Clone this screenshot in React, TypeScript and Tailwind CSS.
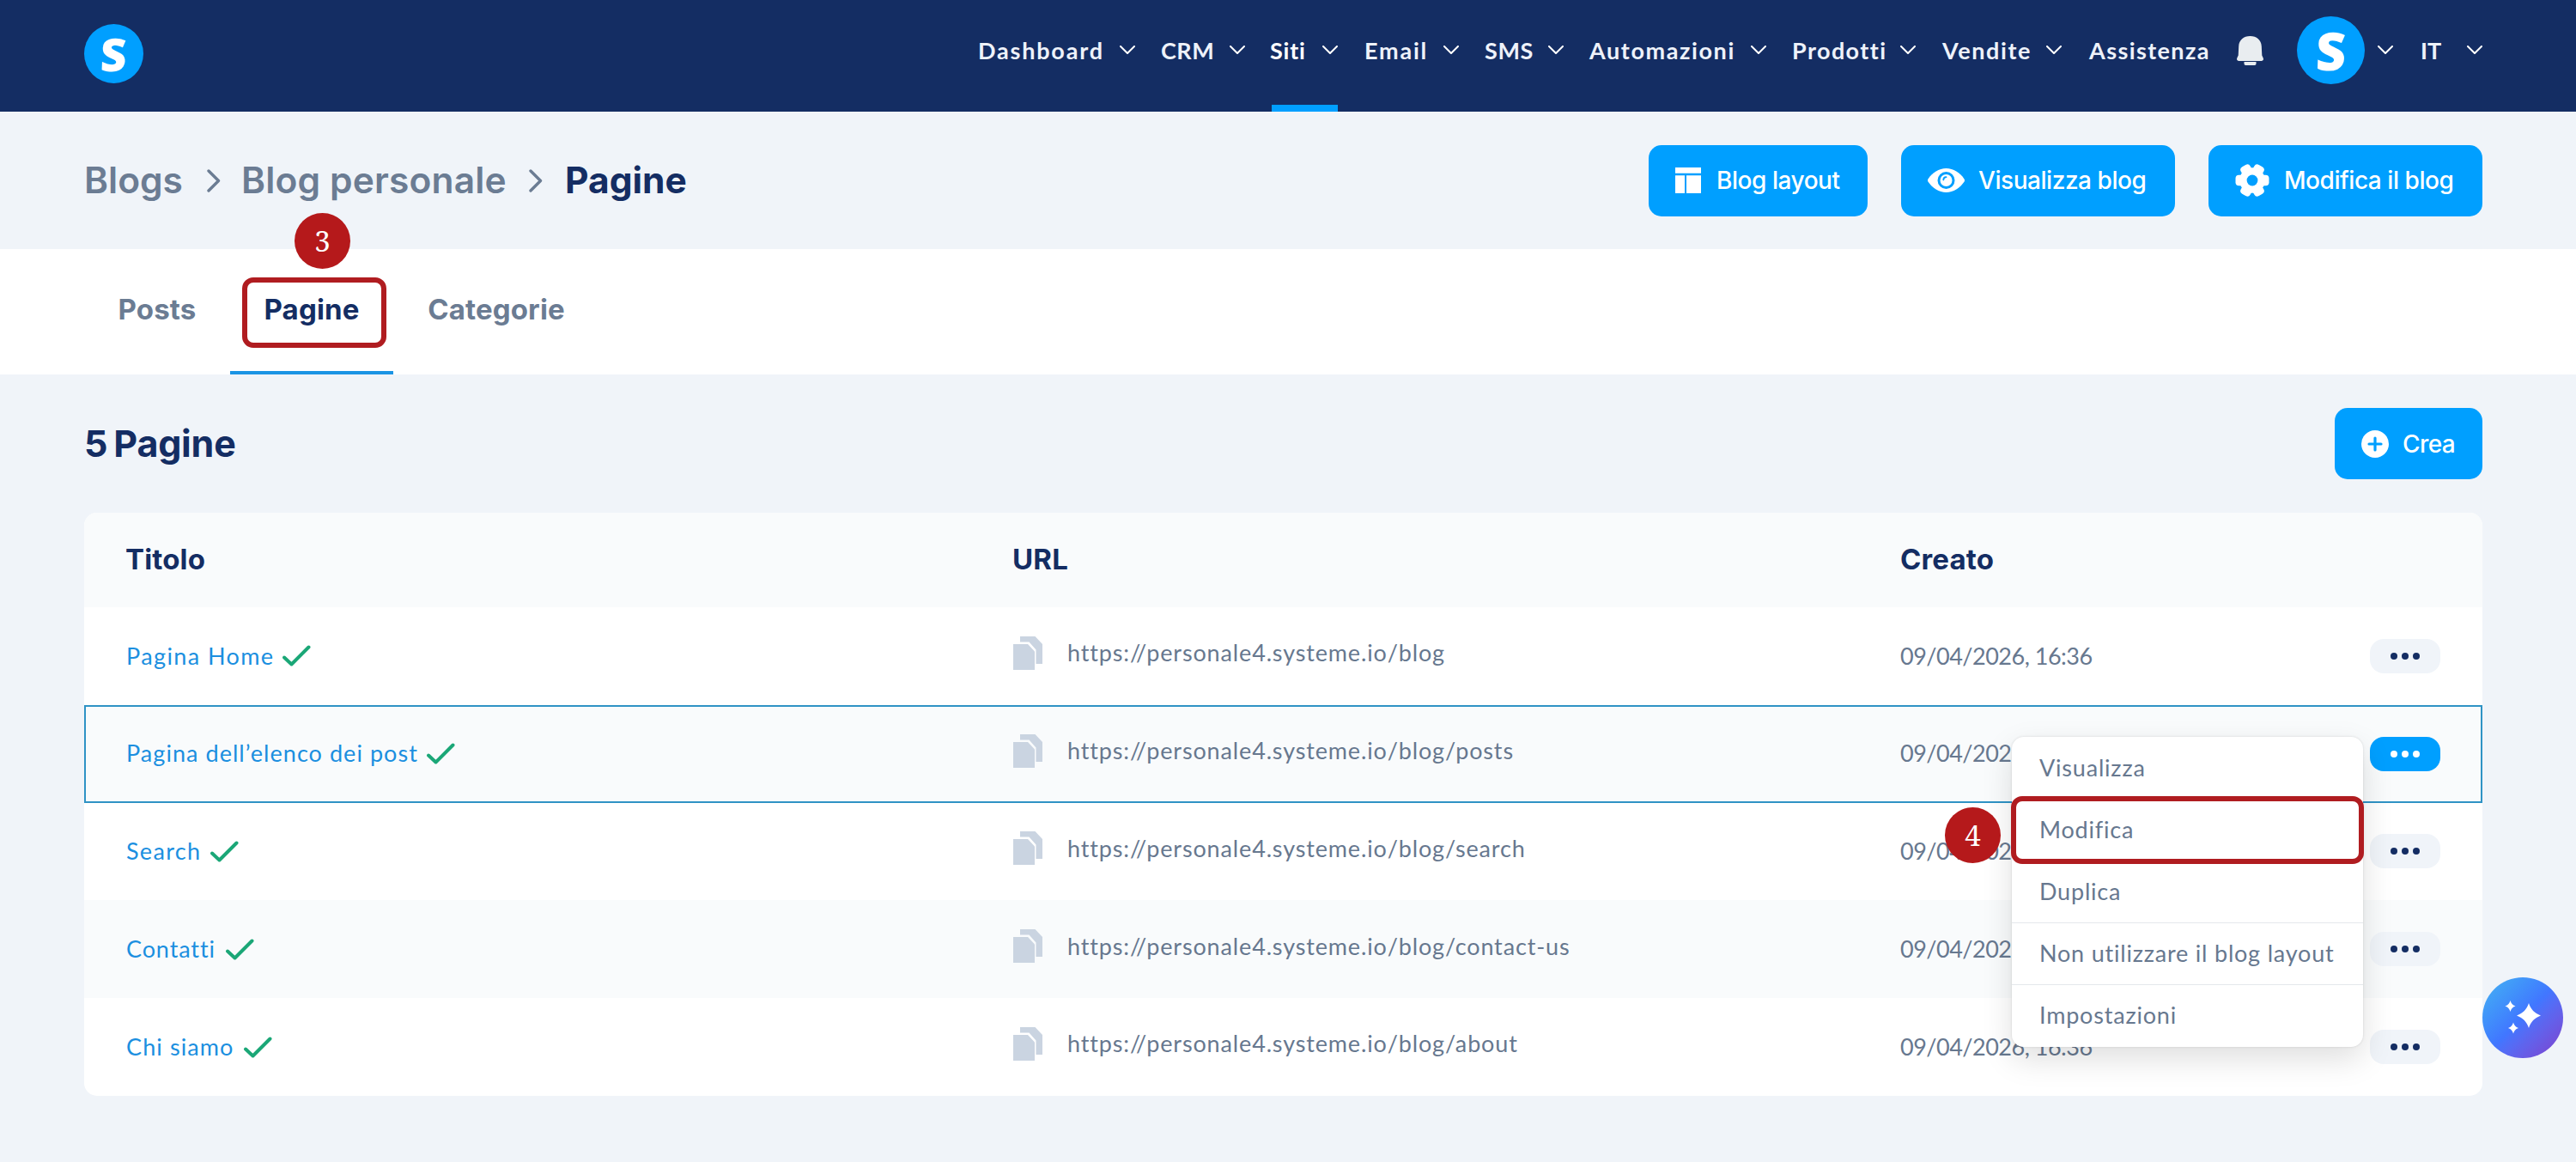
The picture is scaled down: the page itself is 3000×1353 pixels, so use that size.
import React from 'react';
import clsx from 'clsx';

interface NavItem {
  label: string;
  box: string;
  text: string;
  active?: boolean;
}

interface BlogPage {
  title: string;
  titleClass: string;
  url: string;
}

const NAV_ITEMS: NavItem[] = [
  { label: 'Dashboard', box: 'w-[181px] mr-[32px]', text: 'tracking-[1.8px]' },
  { label: 'CRM', box: 'w-[96px] mr-[31px]', text: 'tracking-[0.5px]' },
  { label: 'Siti', box: 'w-[77px] mr-[33px]', text: 'tracking-[0.8px]', active: true },
  { label: 'Email', box: 'w-[108px] mr-[32px]', text: 'tracking-[1.8px]' },
  { label: 'SMS', box: 'w-[90px] mr-[32px]', text: 'tracking-[0.6px]' },
  { label: 'Automazioni', box: 'w-[204px] mr-[32px]', text: 'tracking-[1.6px]' },
  { label: 'Prodotti', box: 'w-[142px] mr-[33px]', text: 'tracking-[1.4px]' },
  { label: 'Vendite', box: 'w-[137px] mr-[32px]', text: 'tracking-[1.6px]' },
];

const PAGES: BlogPage[] = [
  { title: 'Pagina Home', titleClass: 'w-[182px] tracking-[1.4px]', url: 'https://personale4.systeme.io/blog' },
  { title: 'Pagina dell’elenco dei post', titleClass: 'w-[350px] tracking-[1.05px]', url: 'https://personale4.systeme.io/blog/posts' },
  { title: 'Search', titleClass: 'w-[98px] tracking-[1.3px]', url: 'https://personale4.systeme.io/blog/search' },
  { title: 'Contatti', titleClass: 'w-[116px] tracking-[0.9px]', url: 'https://personale4.systeme.io/blog/contact-us' },
  { title: 'Chi siamo', titleClass: 'w-[137px] tracking-[1.1px]', url: 'https://personale4.systeme.io/blog/about' },
];

const MENU = ['Visualizza', 'Modifica', 'Duplica', 'Non utilizzare il blog layout', 'Impostazioni'];

const ChevronDown = () => (
  <svg className="w-[18px] h-[10px] shrink-0 -mt-0.5" viewBox="0 0 18 10" fill="none" stroke="#fff" strokeWidth="2" strokeLinecap="round" strokeLinejoin="round">
    <path d="M1 1l8 8 8-8" />
  </svg>
);

const ChevronRight = () => (
  <svg className="w-[16px] h-[27px] shrink-0" viewBox="0 0 16 27" fill="none" stroke="#6b7c93" strokeWidth="3.4" strokeLinecap="round" strokeLinejoin="round">
    <path d="M2 2l11.5 11.5L2 25" />
  </svg>
);

const BellIcon = () => (
  <svg className="w-[31px] h-[34px] shrink-0" viewBox="0 0 31 34" fill="#e9edf0">
    <path d="M15.500 0C23 0 28.500 4.500 28.800 12L29.300 22.500L30.700 25.500C31.500 27.500 30.500 29 28.500 29H2.500C.5 29-.5 27.500.3 25.500L1.700 22.500L2.200 12C2.500 4.500 8 0 15.500 0Z" />
    <path d="M8.500 30h14v2.200a1.800 1.800 0 0 1-1.800 1.800H10.300a1.800 1.800 0 0 1-1.800-1.800z" />
  </svg>
);

const LayoutIcon = () => (
  <svg className="w-[30px] h-[30px] shrink-0" viewBox="0 0 30 30" fill="#fff">
    <path d="M0 0h30v6.800H0zM0 9.200h11v20.800H0zM13 9.200h17v20.800H13z" />
  </svg>
);

const EyeIcon = () => (
  <svg className="w-[43px] h-[28px] shrink-0" viewBox="0 0 43 28">
    <path d="M21.500 0C30 0 37.500 5 42.400 12.200c.8 1.200.8 2.400 0 3.600C37.500 23 30 28 21.500 28S5.500 23 .6 15.800c-.8-1.200-.8-2.400 0-3.600C5.500 5 13 0 21.500 0Z" fill="#fff" />
    <circle cx="21.500" cy="14" r="8.500" fill="#fff" stroke="#009fff" strokeWidth="3" />
    <path d="M18.300 13.400a3.400 3.400 0 0 1 3.200-3.200" fill="none" stroke="#009fff" strokeWidth="1.800" strokeLinecap="round" />
  </svg>
);

const GearIcon = () => (
  <svg className="w-[40px] h-[38px] shrink-0" viewBox="0 0 40 38" fill="#fff">
    <circle cx="20" cy="19" r="14.800" />
    <rect x="0.500" y="12.700" width="39" height="12.600" rx="4" />
    <rect x="0.500" y="12.700" width="39" height="12.600" rx="4" transform="rotate(60 20 19)" />
    <rect x="0.500" y="12.700" width="39" height="12.600" rx="4" transform="rotate(120 20 19)" />
    <circle cx="20" cy="19" r="6.400" fill="#009fff" />
  </svg>
);

const PlusCircleIcon = () => (
  <svg className="w-[32px] h-[32px] shrink-0" viewBox="0 0 32 32">
    <circle cx="16" cy="16" r="16" fill="#fff" />
    <path d="M16 9v14M9 16h14" stroke="#009fff" strokeWidth="3.200" strokeLinecap="round" />
  </svg>
);

const CheckIcon = () => (
  <svg className="w-[33px] h-[25px] shrink-0" viewBox="0 0 33 25" fill="none" stroke="#1ba777" strokeWidth="4" strokeLinecap="round" strokeLinejoin="round">
    <path d="M2 14.500L10.500 22.500L30.500 2.500" />
  </svg>
);

const CopyIcon = () => (
  <svg className="w-[34px] h-[39px] shrink-0" viewBox="0 0 34 39" fill="#cad4e1">
    <path d="M0 9h17l8 8.500V39H0z" />
    <path d="M8 0h17.500l8.500 9v23h-7.500V15.500L18.500 6.500H8z" />
  </svg>
);

const SparklesIcon = () => (
  <svg className="w-[42px] h-[42px]" viewBox="0 0 42 42" fill="#fff">
    <path d="M28 4C30.500 11.500 34.500 15.500 42 18.500C34.500 21.500 30.500 25.500 28 33C25.500 25.500 21.500 21.500 14 18.500C21.500 15.500 25.500 11.500 28 4Z" />
    <path d="M6.500 1C7.500 4.500 9 6.200 12.500 7.500C9 8.800 7.500 10.500 6.500 14C5.500 10.500 4 8.800.5 7.500C4 6.200 5.500 4.500 6.500 1Z" />
    <path d="M10 26.500C11 30 12.500 31.700 16 33C12.500 34.300 11 36 10 39.500C9 36 7.500 34.300 4 33C7.500 31.700 9 30 10 26.500Z" />
  </svg>
);

const Dots = ({ active }: { active: boolean }) => (
  <button className={clsx('w-[82px] h-[40px] rounded-[16px] flex items-center justify-center gap-[5px]', active ? 'bg-[#009fff]' : 'bg-[#f0f4f9]')}>
    {[0, 1, 2].map(i => (
      <span key={i} className={clsx('size-2 rounded-full', active ? 'bg-white' : 'bg-[#142d63]')} />
    ))}
  </button>
);

const StepBadge = ({ n, className }: { n: number; className: string }) => (
  <span className={clsx("absolute z-20 size-[65px] rounded-full bg-[#b5191b] text-white flex items-center justify-center text-[33px] font-normal tracking-normal leading-none font-['Noto_Serif','Liberation_Serif',serif]", className)}>
    {n}
  </span>
);

const RowMenu = () => (
  <div className="absolute z-10 left-[2245px] top-[37px] w-[409px] h-[361px] rounded-[14px] bg-white shadow-[0_14px_36px_rgba(0,0,0,0.13),0_0_3px_rgba(0,0,0,0.13)] flex flex-col tracking-[0.8px]">
    {MENU.map((item, i) => (
      <div
        key={item}
        className={clsx('relative h-[72px] pl-[32px] flex items-center whitespace-nowrap', i > 2 && 'border-t border-[#e4e8ec]')}
      >
        {item}
        {item === 'Modifica' && (
          <>
            <span className="absolute -left-[1px] -top-[3px] w-[411px] h-[79px] rounded-[13px] border-[6px] border-[#b01c20]" />
            <StepBadge n={4} className="-left-[78px] top-[10px]" />
          </>
        )}
      </div>
    ))}
  </div>
);

const App: React.FC = () => {
  return (
    <div className="w-[3000px] h-[1353px] overflow-hidden relative bg-[#f0f4f9] font-['Lato',sans-serif] text-[27px] text-[#67788f]">
      <header className="h-[130px] bg-[#142d63] pl-[98px] pr-[109px] flex justify-between text-[#eef2fa] font-bold">
        <div className="mt-[28px] size-[69px] rounded-full bg-[#009fff] text-white flex items-center justify-center font-['Open_Sans',sans-serif] font-extrabold text-[53px] leading-none">
          <span className="-skew-x-2">S</span>
        </div>
        <nav className="flex">
          {NAV_ITEMS.map(item => (
            <div
              key={item.label}
              className={clsx('h-full pb-[5px] border-b-8 flex items-center justify-between', item.box, item.active ? 'border-[#009fff] text-white' : 'border-transparent')}
            >
              <span className={clsx('-ml-[2px] pt-[2px]', item.text)}>{item.label}</span>
              <ChevronDown />
            </div>
          ))}
          <div className="h-[117px] flex items-center">
            <span className="w-[172px] pt-[2px] tracking-[1.4px]">Assistenza</span>
            <BellIcon />
            <div className="ml-[39px] size-[79px] rounded-full bg-[#009fff] text-white flex items-center justify-center font-['Open_Sans',sans-serif] font-extrabold text-[61px] leading-none">
              <span className="-skew-x-2">S</span>
            </div>
            <div className="ml-[15px] mr-[32px] flex"><ChevronDown /></div>
            <span className="w-[54px] pt-[2px]">IT</span>
            <ChevronDown />
          </div>
        </nav>
      </header>

      <div className="h-[160px] pl-[98px] pr-[109px] flex items-center justify-between font-['Inter',sans-serif]">
        <div className="flex items-center text-[42.5px] font-semibold text-[#6b7c93] whitespace-nowrap">
          <span className="w-[143px]">Blogs</span>
          <ChevronRight />
          <span className="ml-[24px] w-[335px] tracking-[0.15px]">Blog personale</span>
          <ChevronRight />
          <span className="ml-[26px] font-bold text-[#142d63]">Pagine</span>
        </div>
        <div className="flex gap-[39px] text-[28px] font-medium tracking-[-0.45px] text-white whitespace-nowrap">
          <button className="w-[255px] h-[83px] pl-[31px] rounded-[15px] bg-[#009fff] flex items-center gap-[18px]">
            <LayoutIcon />Blog layout
          </button>
          <button className="w-[319px] h-[83px] pl-[31px] rounded-[15px] bg-[#009fff] flex items-center gap-[16px]">
            <EyeIcon />Visualizza blog
          </button>
          <button className="w-[319px] h-[83px] pl-[31px] rounded-[15px] bg-[#009fff] flex items-center gap-[17px]">
            <GearIcon />Modifica il blog
          </button>
        </div>
      </div>

      <div className="h-[146px] bg-white pl-[98px] flex font-['Inter',sans-serif] text-[33px] font-bold tracking-[0.15px] text-[#6b7c93]">
        <div className="w-[170px] pb-1 flex items-center justify-center">Posts</div>
        <div className="relative w-[190px] border-b-4 border-[#1b94e4] text-[#142d63] flex items-center justify-center">
          Pagine
          <span className="absolute left-[14px] top-[33px] w-[168px] h-[82px] rounded-[13px] border-[6px] border-[#b01c20]" />
          <StepBadge n={3} className="left-[75px] -top-[42px]" />
        </div>
        <div className="w-[240px] pb-1 flex items-center justify-center">Categorie</div>
      </div>

      <div className="h-[161px] pl-[98px] pr-[109px] flex items-center justify-between font-['Inter',sans-serif]">
        <h1 className="text-[43px] font-bold tracking-[-0.2px] [word-spacing:-3px] text-[#142d63]">5 Pagine</h1>
        <button className="w-[172px] h-[83px] pl-[31px] rounded-[15px] bg-[#009fff] text-white text-[28px] font-medium tracking-[-0.6px] flex items-center gap-[16px]">
          <PlusCircleIcon />Crea
        </button>
      </div>

      <div className="mx-[98px] w-[2793px] rounded-[15px] bg-white">
        <div className="h-[110px] pl-[48px] rounded-t-[15px] bg-[#f9fbfc] grid grid-cols-[1033px_1034px_1fr] items-center font-['Inter',sans-serif] text-[33px] font-bold tracking-[0.15px] text-[#142d63]">
          <span>Titolo</span>
          <span>URL</span>
          <span>Creato</span>
        </div>
        {PAGES.map((page, i) => {
          const selected = i === 1;
          return (
            <div
              key={page.title}
              className={clsx(
                'relative h-[113.8px] pl-[48px] pr-[49px] grid grid-cols-[1034px_1033px_1fr] items-center whitespace-nowrap',
                i % 2 === 1 && 'bg-[#f9fbfc]',
                i === PAGES.length - 1 && 'rounded-b-[15px]'
              )}
            >
              {selected && <span className="absolute inset-0 border-2 border-[#2f93c5]" />}
              <div className="flex items-center pl-[1px] text-[#1b8fe0]">
                <span className={page.titleClass}>{page.title}</span>
                <CheckIcon />
              </div>
              <div className="flex items-center gap-[29px] pb-[7px]">
                <CopyIcon />
                <span className="tracking-[0.85px]">{page.url}</span>
              </div>
              <div className="flex items-center justify-between">
                <span className="tracking-[-0.5px]">09/04/2026, 16:36</span>
                <Dots active={selected} />
              </div>
              {selected && <RowMenu />}
            </div>
          );
        })}
      </div>

      <button className="absolute right-[15px] top-[1138px] size-[94px] rounded-full bg-linear-135 from-[#43a8f5] from-10% via-[#4176ff] via-50% to-[#7c3dcc] to-100% flex items-center justify-center">
        <SparklesIcon />
      </button>
    </div>
  );
};

export default App;
